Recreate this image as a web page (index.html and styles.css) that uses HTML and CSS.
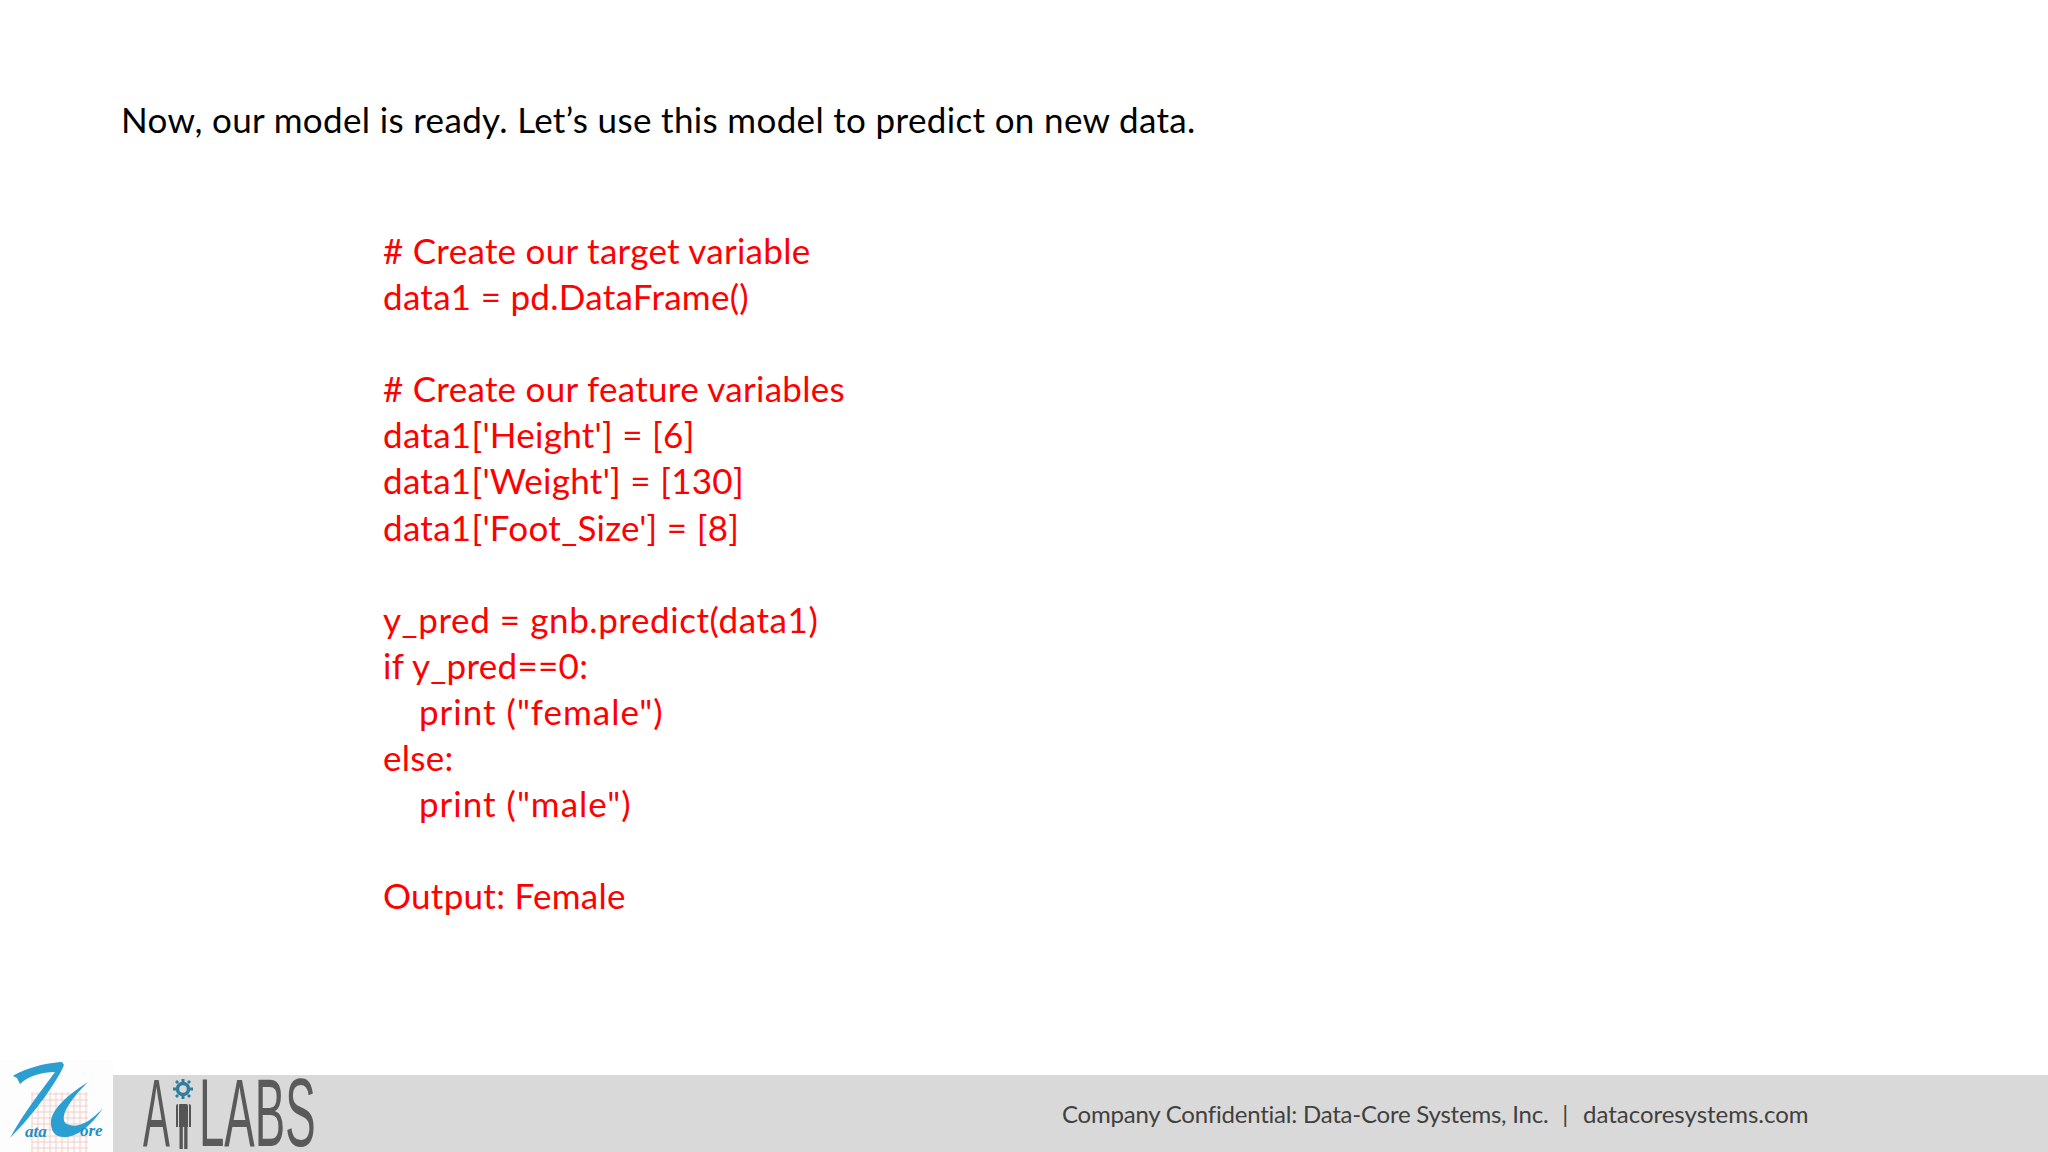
FILE: index.html
```html
<!DOCTYPE html>
<html lang="en">
<head>
<meta charset="utf-8">
<title>Predict on new data</title>
<link rel="stylesheet" href="styles.css">
</head>
<body>
<div class="slide">
  <main class="content">
    <p class="lead">Now, our model is ready. Let’s use this model to predict on new data.</p>
    <div class="code">
      <div class="line"># Create our target variable</div>
      <div class="line">data1 = pd.DataFrame()</div>
      <div class="line blank">&nbsp;</div>
      <div class="line"># Create our feature variables</div>
      <div class="line">data1['Height'] = [6]</div>
      <div class="line">data1['Weight'] = [130]</div>
      <div class="line">data1['Foot_Size'] = [8]</div>
      <div class="line blank">&nbsp;</div>
      <div class="line call">y_pred = gnb.predict(data1)</div>
      <div class="line">if y_pred==0:</div>
      <div class="line indent">print ("female")</div>
      <div class="line">else:</div>
      <div class="line indent">print ("male")</div>
      <div class="line blank">&nbsp;</div>
      <div class="line">Output: Female</div>
    </div>
  </main>
  <footer class="footer">
    <svg class="logo-dc" viewBox="0 0 113 92" width="113" height="92" aria-label="DataCore">
      <rect width="113" height="92" fill="#fdfdfd"/>
      <g stroke="#eeb9b4" stroke-width="1" opacity=".7">
        <path d="M32 32V92M38 32V92M44 32V92M50 32V92M56 32V92M62 32V92M68 32V92M74 32V92M80 32V92M86 32V92"/>
        <path d="M32 34H88M32 40H88M32 46H88M32 52H88M32 58H88M32 64H88M32 70H88M32 76H88M32 82H88M32 88H88"/>
      </g>
      <path fill="#2b9fd2" d="M13 16C22 10 42 3 62 2L64 5C58 20 36 52 10 78C24 52 42 30 55 12C42 12 28 16 20 24L17 18Z"/>
      <path fill="#2b9fd2" d="M88 22C72 32 54 46 51 60C50 72 56 78 66 77C80 76 94 62 103 48C92 60 80 68 70 65C62 64 62 56 68 46C74 36 82 28 88 22Z"/>
      <text class="logo-small" x="25" y="77">ata</text>
      <text class="logo-small" x="80" y="76">ore</text>
    </svg>
    <div class="logo-ai" aria-label="AI Labs">
      <div class="brand-a"><span class="brand-text brand-text-a">A</span></div>
      <svg class="brand-figure" viewBox="0 0 28 72" width="28" height="72" aria-hidden="true">
        <circle cx="14" cy="12" r="5.500" fill="none" stroke="#2f7d9e" stroke-width="3.500"/>
        <path fill="#2f7d9e" d="M12.500 2h3v3h-3zM12.500 19h3v3h-3zM4 10.500h3v3H4zM21 10.500h3v3h-3zM6 5l2-2 2 2-2 2zM18 5l2-2 2 2-2 2zM6 19l2-2 2 2-2 2zM18 19l2-2 2 2-2 2z"/>
        <path fill="#555" d="M10.500 27H17.500Q19 27 19 29V50H10V29Q10 27 10.500 27ZM10.500 50H13.800V72H10.500ZM15.200 50H18.500V72H15.200ZM7 29Q7 27 9 27V50H7ZM20 27Q22 27 22 29V50H20Z"/>
      </svg>
      <div class="brand-labs"><span class="brand-text brand-text-labs">LABS</span></div>
    </div>
    <p class="legal">Company Confidential: Data-Core Systems, Inc.<span class="legal-sep">&nbsp; |&nbsp; </span><span class="legal-site">datacoresystems.com</span></p>
  </footer>
</div>
</body>
</html>
```
FILE: styles.css
```css
* { box-sizing: border-box; }
html, body { margin: 0; padding: 0; background: #fff; }
.slide {
  width: 2048px;
  height: 1152px;
  display: flex;
  flex-direction: column;
  overflow: hidden;
  font-family: Lato, "Open Sans", sans-serif;
}
.content { flex: 1; padding: 96px 0 0 121px; }
.lead {
  margin: 0;
  font-size: 35px;
  line-height: 46px;
  color: #000;
  letter-spacing: 0.34px;
}
.code {
  margin: 85px 0 0 262px;
  color: #f00;
  font-size: 35px;
  letter-spacing: 0.28px;
}
.line { height: 46.1px; line-height: 46.1px; white-space: pre; }
.call { letter-spacing: 0.58px; }
.indent { padding-left: 36px; letter-spacing: 1px; }
.footer {
  height: 77px;
  background: #d9d9d9;
  display: flex;
  align-items: flex-start;
}
.logo-dc { display: block; margin-top: -15px; flex: none; }
.logo-small { font-family: "Liberation Serif", serif; font-style: italic; font-weight: 700; font-size: 17px; fill: #1f8fc0; }
.logo-ai {
  width: 217px;
  height: 77px;
  flex: none;
  display: flex;
  padding: 3px 0 0 30px;
}
.brand-a { width: 26px; height: 69px; flex: none; }
.brand-labs { width: 115px; height: 69px; flex: none; margin-left: 2.400px; }
.brand-figure { display: block; flex: none; margin-top: -1px; }
.brand-text {
  display: inline-block;
  height: 69px;
  line-height: 69px;
  font-family: "Liberation Sans", sans-serif;
  font-size: 96px;
  color: #5a5a5a;
  white-space: nowrap;
  transform-origin: left top;
}
.brand-text-a { transform: scaleX(.42); }
.brand-text-labs { transform: scaleX(.475); }
.legal {
  margin: 0 0 0 732px;
  line-height: 77px;
  font-size: 24px;
  letter-spacing: -0.22px;
  color: #404040;
  white-space: pre;
}
.legal-sep { letter-spacing: 0.8px; }
.legal-site { letter-spacing: -0.02px; }
```
